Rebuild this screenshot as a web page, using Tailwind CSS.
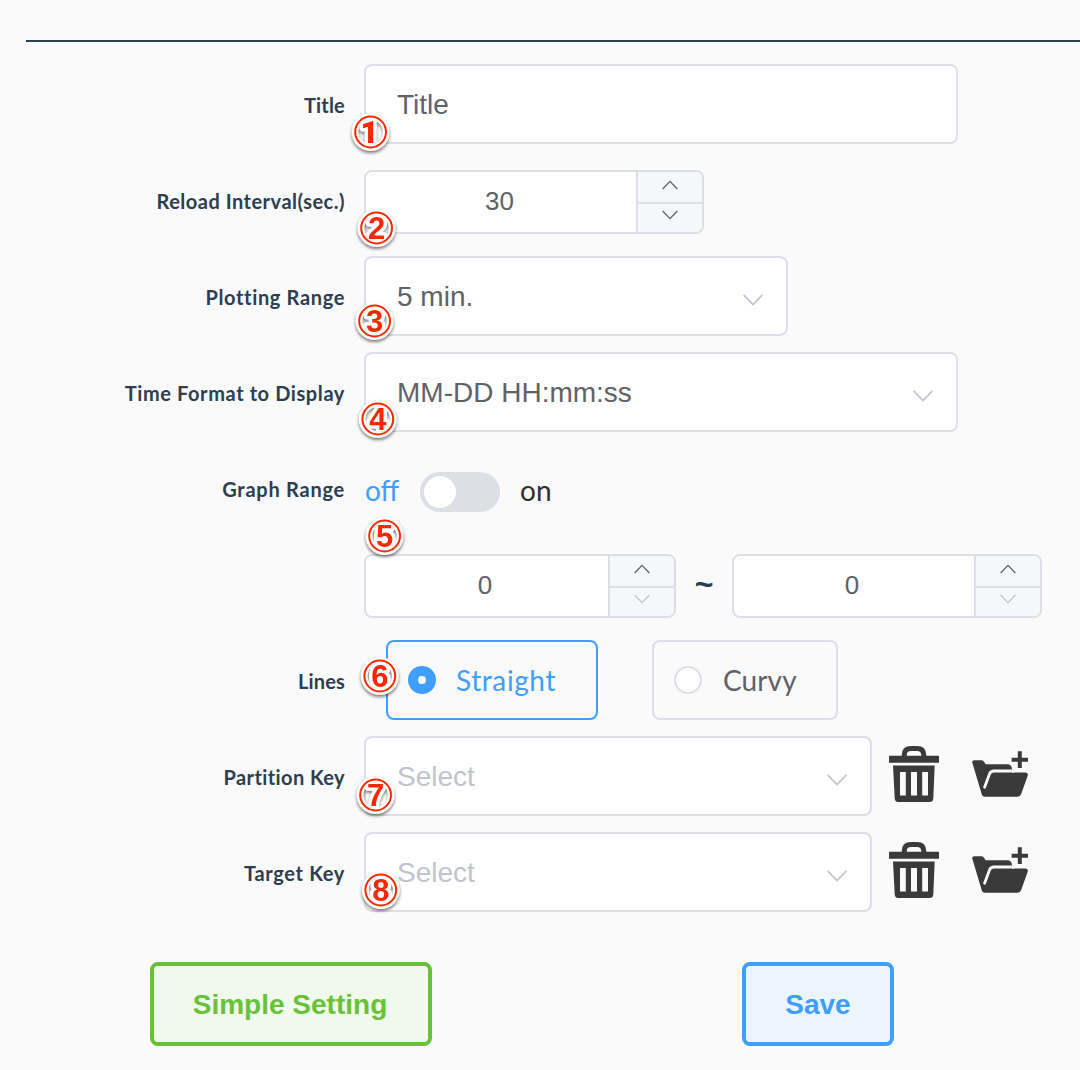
<!DOCTYPE html>
<html lang="en">
<head>
<meta charset="utf-8">
<title>Graph Settings</title>
<script src="https://cdn.jsdelivr.net/npm/@tailwindcss/browser@4"></script>
</head>
<body class="relative h-[1070px] w-[1080px] overflow-hidden bg-[#fafafa] font-['Liberation_Sans',sans-serif] text-[28px] text-[#606266]">
<svg class="hidden">
  <defs>
    <symbol id="down" viewBox="0 0 20 12"><path d="M.6 .8 10 10.6 19.4 .8" fill="none" stroke="currentColor" stroke-width="1.7"/></symbol>
    <symbol id="up" viewBox="0 0 16 10"><path d="M.6 9 8 1.4 15.4 9" fill="none" stroke="currentColor" stroke-width="1.3"/></symbol>
    <symbol id="dn" viewBox="0 0 16 10"><path d="M.6 1 8 8.6 15.4 1" fill="none" stroke="currentColor" stroke-width="1.3"/></symbol>
    <symbol id="trash" viewBox="0 0 50 56">
      <path d="M0 9.7H50V16.7H0Z" fill="#3a3a3a"/>
      <path d="M15.2 11V9.5Q15.2 2.6 22 2.6H28Q34.8 2.6 34.8 9.5V11" fill="none" stroke="#3a3a3a" stroke-width="5"/>
      <path fill-rule="evenodd" d="M4 19.5H45.7L44.3 52.5Q44 56 40.5 56H9.5Q6 56 5.7 52.5ZM11 26V49.5H16.8V26ZM22 26V49.5H28V26ZM33.2 26V49.5H39V26Z" fill="#3a3a3a"/>
    </symbol>
    <symbol id="folder" viewBox="0 0 56 46">
      <path d="M.2 11.2Q0 9.3 2.2 9.3H9.3Q11 9.3 12 10.7L13.7 13.2H36Q39.8 13.6 40 18.5V21.6H53.5Q56.6 21.8 55.6 25L49.2 43Q48.2 45.8 45.3 45.8H13Q10.5 45.8 9.8 43.5Z" fill="#3a3a3a"/>
      <path d="M12.6 36.2 17.4 23.2Q18.6 20 22 20H42" fill="none" stroke="#fafafa" stroke-width="2.8" stroke-linecap="round"/>
      <path d="M39.6 8.7H56M47.8.3V17" fill="none" stroke="#3a3a3a" stroke-width="4"/>
    </symbol>
  </defs>
</svg>

<div class="ml-[26px] h-[42px] border-b-2 border-[#2c3e50]"></div>

<main class="mt-[22px] flex flex-col gap-4">
  <div class="flex h-20 gap-5">
    <div class="flex w-[344px] items-center justify-end whitespace-nowrap pt-0.5 font-['Lato',sans-serif] text-[20px] font-bold text-[#2c3e50]"><span class="-mr-px tracking-[0.2px]">Title</span></div>
    <div class="flex w-[594px] items-center rounded-lg border-2 border-[#dcdfe6] bg-white pt-0.5 pl-[31px]">Title</div>
  </div>

  <div class="flex h-20 items-center gap-5">
    <div class="flex w-[344px] items-center justify-end whitespace-nowrap pt-0.5 font-['Lato',sans-serif] text-[20px] font-bold text-[#2c3e50]"><span class="-mr-px tracking-[0.5px]">Reload Interval(sec.)</span></div>
    <div class="mt-1 flex h-16 w-[340px] overflow-hidden rounded-lg border-2 border-[#dcdfe6] bg-white text-[26px]">
      <div class="flex flex-1 items-center justify-center pr-[3px] pb-0.5">30</div>
      <div class="flex w-[66px] flex-col border-l-2 border-[#dcdfe6] bg-[#f5f7fa]">
        <div class="flex h-8 justify-center border-b-2 border-[#dcdfe6] pt-2 pr-px"><svg class="h-[10px] w-4"><use href="#up"/></svg></div>
        <div class="flex justify-center pt-1.5 pr-px"><svg class="h-[10px] w-4"><use href="#dn"/></svg></div>
      </div>
    </div>
  </div>

  <div class="flex h-20 gap-5">
    <div class="flex w-[344px] items-center justify-end whitespace-nowrap pt-0.5 font-['Lato',sans-serif] text-[20px] font-bold text-[#2c3e50]"><span class="-mr-px tracking-[0.65px]">Plotting Range</span></div>
    <div class="flex w-[424px] items-center justify-between rounded-lg border-2 border-[#dcdfe6] bg-white pt-0.5 pr-[23px] pl-[31px]">5 min.<svg class="mt-1.5 h-3 w-5 text-[#c0c4cc]"><use href="#down"/></svg></div>
  </div>

  <div class="flex h-20 gap-5">
    <div class="flex w-[344px] items-center justify-end whitespace-nowrap pt-0.5 font-['Lato',sans-serif] text-[20px] font-bold text-[#2c3e50]"><span class="-mr-px tracking-[0.6px]">Time Format to Display</span></div>
    <div class="flex w-[594px] items-center justify-between rounded-lg border-2 border-[#dcdfe6] bg-white pt-0.5 pr-[23px] pl-[31px]">MM-DD HH:mm:ss<svg class="mt-1.5 h-3 w-5 text-[#c0c4cc]"><use href="#down"/></svg></div>
  </div>

  <div class="flex h-44 gap-5">
    <div class="flex h-20 w-[344px] items-center justify-end whitespace-nowrap pt-0.5 font-['Lato',sans-serif] text-[20px] font-bold text-[#2c3e50]"><span class="-mr-px tracking-[0.75px]">Graph Range</span></div>
    <div class="pt-6">
      <div class="flex h-10 items-center font-['Lato',sans-serif]">
        <span class="w-14 pb-1 pl-px text-[#409eff]">off</span>
        <div class="flex h-10 w-20 items-center rounded-full bg-[#dcdfe6] pl-1"><div class="size-8 rounded-full bg-white"></div></div>
        <span class="ml-5 pb-1 text-[#303133]">on</span>
      </div>
      <div class="mt-[42px] flex">
        <div class="flex h-16 w-[312px] overflow-hidden rounded-lg border-2 border-[#dcdfe6] bg-white text-[26px]">
          <div class="flex flex-1 items-center justify-center pr-1 pb-0.5">0</div>
          <div class="flex w-[66px] flex-col border-l-2 border-[#dcdfe6] bg-[#f5f7fa]">
            <div class="flex h-8 justify-center border-b-2 border-[#dcdfe6] pt-2 pr-px"><svg class="h-[10px] w-4"><use href="#up"/></svg></div>
            <div class="flex justify-center pt-1.5 pr-px text-[#c0c4cc]"><svg class="h-[10px] w-4"><use href="#dn"/></svg></div>
          </div>
        </div>
        <div class="flex w-14 items-center justify-center pb-1 text-[32px] font-bold text-[#2c3e50]">~</div>
        <div class="flex h-16 w-[310px] overflow-hidden rounded-lg border-2 border-[#dcdfe6] bg-white text-[26px]">
          <div class="flex flex-1 items-center justify-center pr-1 pb-0.5">0</div>
          <div class="flex w-[66px] flex-col border-l-2 border-[#dcdfe6] bg-[#f5f7fa]">
            <div class="flex h-8 justify-center border-b-2 border-[#dcdfe6] pt-2 pr-px"><svg class="h-[10px] w-4"><use href="#up"/></svg></div>
            <div class="flex justify-center pt-1.5 pr-px text-[#c0c4cc]"><svg class="h-[10px] w-4"><use href="#dn"/></svg></div>
          </div>
        </div>
      </div>
    </div>
  </div>

  <div class="flex h-20 gap-5">
    <div class="flex w-[344px] items-center justify-end whitespace-nowrap pt-0.5 font-['Lato',sans-serif] text-[20px] font-bold text-[#2c3e50]"><span class="-mr-px tracking-[0.15px]">Lines</span></div>
    <div class="ml-[22px] flex gap-[54px] font-['Lato',sans-serif]">
      <div class="flex w-[212px] items-center gap-5 rounded-lg border-2 border-[#409eff] pl-5 text-[#409eff]"><span class="flex size-7 items-center justify-center rounded-full bg-[#409eff]"><span class="size-2 rounded-full bg-white"></span></span><span class="tracking-[0.6px]">Straight</span></div>
      <div class="flex w-[186px] items-center gap-[21px] rounded-lg border-2 border-[#dcdfe6] pl-5"><span class="size-7 rounded-full border-2 border-[#dcdfe6] bg-white"></span><span class="tracking-[0.1px]">Curvy</span></div>
    </div>
  </div>

  <div class="flex h-20 gap-5">
    <div class="flex w-[344px] items-center justify-end whitespace-nowrap pt-0.5 font-['Lato',sans-serif] text-[20px] font-bold text-[#2c3e50]"><span class="-mr-px tracking-[0.4px]">Partition Key</span></div>
    <div class="flex">
      <div class="flex w-[508px] items-center justify-between rounded-lg border-2 border-[#dcdfe6] bg-white pt-0.5 pr-[23px] pl-[31px] text-[#c0c4cc]">Select<svg class="mt-1.5 h-3 w-5"><use href="#down"/></svg></div>
      <div class="flex items-center gap-[33px] pb-1 pl-[17px]"><svg class="h-14 w-[50px]"><use href="#trash"/></svg><svg class="h-[46px] w-14"><use href="#folder"/></svg></div>
    </div>
  </div>

  <div class="flex h-20 gap-5">
    <div class="flex w-[344px] items-center justify-end whitespace-nowrap pt-0.5 font-['Lato',sans-serif] text-[20px] font-bold text-[#2c3e50]"><span class="-mr-px tracking-[0.65px]">Target Key</span></div>
    <div class="flex">
      <div class="flex w-[508px] items-center justify-between rounded-lg border-2 border-[#dcdfe6] bg-white pt-0.5 pr-[23px] pl-[31px] text-[#c0c4cc]">Select<svg class="mt-1.5 h-3 w-5"><use href="#down"/></svg></div>
      <div class="flex items-center gap-[33px] pb-1 pl-[17px]"><svg class="h-14 w-[50px]"><use href="#trash"/></svg><svg class="h-[46px] w-14"><use href="#folder"/></svg></div>
    </div>
  </div>
</main>

<div class="mt-[50px] ml-[150px] flex gap-[310px] font-bold">
  <button class="h-[84px] w-[282px] rounded-lg border-4 border-[#67c23a] bg-[#f0f9eb] pt-0.5 pr-0.5 text-[#67c23a]">Simple Setting</button>
  <button class="h-[84px] w-[152px] rounded-lg border-4 border-[#409eff] bg-[#ecf5ff] pt-0.5 text-[#409eff]">Save</button>
</div>

<!-- numbered callouts over the form -->
<svg class="absolute inset-0 h-[1070px] w-[1080px] font-['Liberation_Sans',sans-serif] text-[31px] font-bold" viewBox="0 0 1080 1070" text-anchor="middle">
  <defs>
    <g id="ring"><circle r="15.6" fill="none" stroke="#fff" stroke-width="7"/></g>
    <g id="red"><circle r="15.4" fill="none" stroke="#ff2600" stroke-width="2"/></g>
  </defs>
  <g class="drop-shadow-[0_2px_1.5px_rgba(0,0,0,0.5)]" fill="#ff2600" stroke="#fff" stroke-width="7" stroke-linejoin="round" paint-order="stroke">
    <g transform="translate(370.6 132)"><use href="#ring"/><text x="-1" y="11" class="font-['Roboto',sans-serif] font-black">1</text><use href="#red"/></g>
    <g transform="translate(376.6 228)"><use href="#ring"/><text y="10.5">2</text><use href="#red"/></g>
    <g transform="translate(374.6 321)"><use href="#ring"/><text y="10.5">3</text><use href="#red"/></g>
    <g transform="translate(377.8 419)"><use href="#ring"/><text y="10.5">4</text><use href="#red"/></g>
    <g transform="translate(384.6 536)"><use href="#ring"/><text y="10.5">5</text><use href="#red"/></g>
    <g transform="translate(379.8 676)"><use href="#ring"/><text y="10.5">6</text><use href="#red"/></g>
    <g transform="translate(375.6 795)"><use href="#ring"/><text y="10.5">7</text><use href="#red"/></g>
    <g transform="translate(380.8 890)"><use href="#ring"/><text y="10.5">8</text><use href="#red"/></g>
  </g>
</svg>
</body>
</html>
